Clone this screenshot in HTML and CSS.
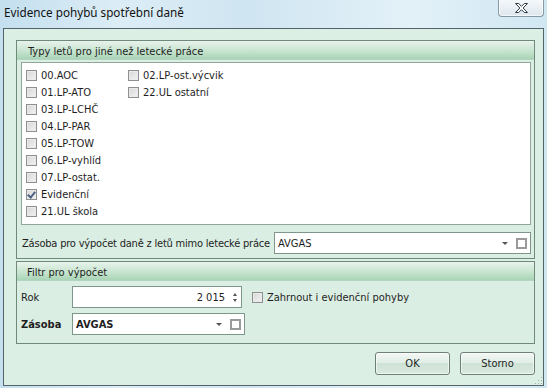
FILE: index.html
```html
<!DOCTYPE html>
<html lang="cs">
<head>
  <meta charset="UTF-8">
  <meta name="viewport" content="width=device-width, initial-scale=1.0">
  <title>Evidence pohybů spotřební daně</title>
  <link rel="stylesheet" href="styles.css">
</head>
<body>
  <div class="window">
    <div class="titlebar">
      <span class="title">Evidence pohybů spotřební daně</span>
      <div class="close">
        <svg width="15" height="12" viewBox="0 0 15 12">
          <path d="M1.5 1.5h3.2l2.8 2.8 2.8-2.8h3.2l-4.4 4.5 4.4 4.5h-3.2L7.5 7.7 4.7 10.5H1.5l4.4-4.5z" fill="#fff" stroke="#2f3a44" stroke-width="1" stroke-linejoin="round"/>
        </svg>
      </div>
    </div>

    <div class="client">
      <div class="group group-types">
        <div class="group-head">Typy letů pro jiné než letecké práce</div>
        <div class="group-body">
          <div class="list">
            <label class="check"><span class="box"></span>00.AOC</label>
            <label class="check"><span class="box"></span>01.LP-ATO</label>
            <label class="check"><span class="box"></span>03.LP-LCHČ</label>
            <label class="check"><span class="box"></span>04.LP-PAR</label>
            <label class="check"><span class="box"></span>05.LP-TOW</label>
            <label class="check"><span class="box"></span>06.LP-vyhlíd</label>
            <label class="check"><span class="box"></span>07.LP-ostat.</label>
            <label class="check"><span class="box checked"></span>Evidenční</label>
            <label class="check"><span class="box"></span>21.UL škola</label>
            <label class="check"><span class="box"></span>02.LP-ost.výcvik</label>
            <label class="check"><span class="box"></span>22.UL ostatní</label>
          </div>
          <div class="row row-stock">
            <span class="row-label">Zásoba pro výpočet daně z letů mimo letecké práce</span>
            <div class="combo combo-wide">
              <span class="combo-text">AVGAS</span>
              <span class="arrow"></span>
              <span class="clear"></span>
            </div>
          </div>
        </div>
      </div>

      <div class="group group-filter">
        <div class="group-head">Filtr pro výpočet</div>
        <div class="group-body">
          <div class="row">
            <span class="field-label">Rok</span>
            <div class="spin">
              <span class="spin-value">2 015</span>
              <span class="spin-buttons">
                <span class="up"></span>
                <span class="down"></span>
              </span>
            </div>
            <label class="check check-inline"><span class="box"></span>Zahrnout i evidenční pohyby</label>
          </div>
          <div class="row">
            <span class="field-label bold">Zásoba</span>
            <div class="combo">
              <span class="combo-text bold">AVGAS</span>
              <span class="arrow"></span>
              <span class="clear"></span>
            </div>
          </div>
        </div>
      </div>

      <div class="actions">
        <button class="btn">OK</button>
        <button class="btn">Storno</button>
      </div>
      <div class="grip"></div>
    </div>
  </div>
</body>
</html>
```

FILE: styles.css
```css
body { margin: 0; background: #cfe5f1; font-family: "DejaVu Sans Condensed", "DejaVu Sans", sans-serif; font-size: 11px; color: #1e1e1e; }

.window { width: 547px; height: 388px; display: flex; flex-direction: column; background: linear-gradient(90deg, #c4dfee 0%, #dcedf6 22%, #cfe5f1 45%, #e3f1f8 75%, #d0e7f2 100%); overflow: hidden; }

/* title bar */
.titlebar { height: 28px; flex: none; display: flex; align-items: flex-start; padding-left: 4px; position: relative; }
.title { font-family: "Noto Sans", sans-serif; font-size: 11.7px; color: #111; margin-top: 4px; }
.close { position: absolute; top: -1px; left: 498px; width: 44px; height: 17px; border: 1px solid #8798a4; border-top: none; border-radius: 0 0 4px 4px; background: linear-gradient(#f6f9fb, #dde7ee); display: flex; align-items: center; justify-content: center; box-shadow: inset 0 0 0 1px rgba(255,255,255,0.7); }

/* client area */
.client { position: relative; width: 520px; height: 345px; margin-left: 3px; border: 1px solid #55646b; background: #dcefe4; padding: 11px 7px 0 12px; }

.group { width: 517px; border: 1px solid #6f8a7b; background: #dbeee3; }
.group-head { height: 19px; box-sizing: border-box; padding: 4px 0 0 11px; background: linear-gradient(#e8f3ec, #c4e3cd 60%, #a9d4b6); border-bottom: 1px solid #b5d4c0; }
.group-body { padding: 0 3px 4px 4px; }

.list { height: 157px; margin-top: 2px; border: 1px solid #8fa799; background: #fff; padding: 4px 0 0 4px; display: grid; grid-auto-flow: column; grid-template-rows: repeat(9, 17px); grid-template-columns: 102px auto; align-content: start; justify-content: start; }

.check { display: flex; align-items: center; gap: 4px; white-space: nowrap; }
.box { width: 9px; height: 9px; flex: none; border: 1px solid #8e8f8f; background: linear-gradient(135deg, #d6d6d6, #f4f4f4); box-shadow: inset 0 0 0 1px #eaeaea; position: relative; }
.box.checked::after { content: ""; position: absolute; left: 2px; top: 0; width: 3px; height: 6px; border: solid #4b6484; border-width: 0 2px 2px 0; transform: rotate(40deg); }

.row { display: flex; align-items: center; height: 22px; }
.row-stock { margin-top: 7px; padding-left: 1px; }
.row-label { width: 252px; flex: none; white-space: nowrap; letter-spacing: -0.2px; }

.combo { width: 168px; height: 20px; border: 1px solid #7f978a; background: #fff; display: flex; align-items: center; padding-left: 3px; }
.combo-wide { width: 252px; }
.combo-text { flex: 1; }
.arrow { width: 0; height: 0; border-left: 3px solid transparent; border-right: 3px solid transparent; border-top: 3px solid #555; margin-right: 8px; }
.clear { width: 7px; height: 7px; border: 2px solid #9a9a9a; background: #fff; margin-right: 3px; }
.bold { font-weight: bold; }

.group-filter { margin-top: 2px; }
.group-filter .group-head { padding-left: 10px; }
.group-filter .group-body { padding: 5px 0 8px 4px; display: flex; flex-direction: column; gap: 5px; }
.field-label { width: 51px; flex: none; }

.spin { width: 168px; height: 20px; border: 1px solid #7f978a; background: #fff; display: flex; align-items: center; justify-content: flex-end; }
.spin-value { margin-right: 8px; }
.spin-buttons { display: flex; flex-direction: column; gap: 3px; margin-right: 4px; }
.spin-buttons span { width: 0; height: 0; border-left: 2.5px solid transparent; border-right: 2.5px solid transparent; }
.spin-buttons .up { border-bottom: 3px solid #555; }
.spin-buttons .down { border-top: 3px solid #555; }
.check-inline { margin-left: 10px; gap: 4px; }

/* buttons */
.actions { display: flex; justify-content: flex-end; gap: 10px; margin-top: 8px; padding-right: 1px; }
.btn { width: 75px; height: 23px; font-family: inherit; font-size: 11px; color: #1e1e1e; border: 1px solid #6f7f77; border-radius: 3px; background: linear-gradient(#f3f7f4, #e2eee7 45%, #cfe2d6 50%, #d9eadf); box-shadow: inset 0 0 0 1px rgba(255,255,255,0.6); }

.grip { position: absolute; right: 1px; bottom: 1px; width: 8px; height: 8px; background: radial-gradient(circle, #9bb0a4 0.8px, transparent 1px) 0 0 / 3px 3px; clip-path: polygon(100% 0, 100% 100%, 0 100%); }
```
